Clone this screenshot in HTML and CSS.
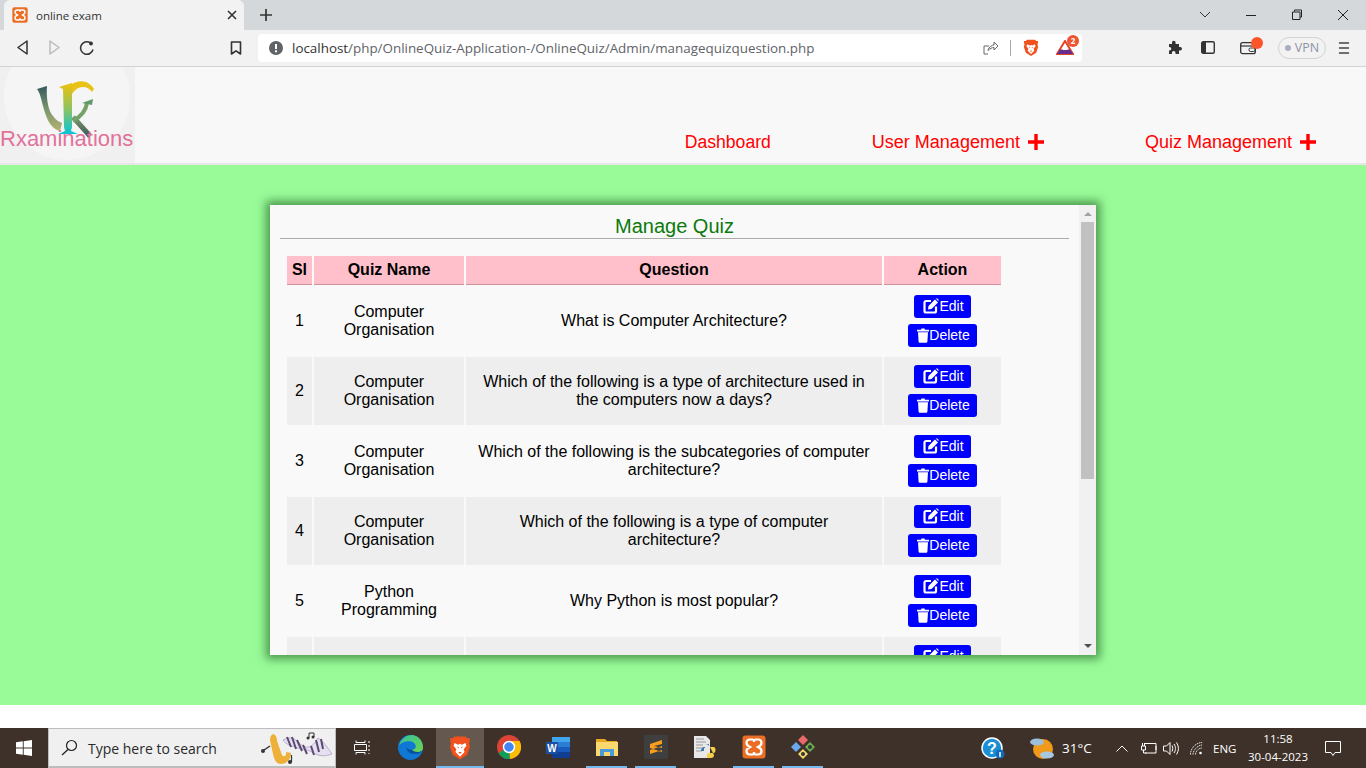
FILE: index.html
```html
<!DOCTYPE html>
<html lang="en">
<head>
<meta charset="utf-8">
<title>online exam</title>
<link rel="stylesheet" href="styles.css">
</head>
<body>
<svg class="defs" width="0" height="0">
  <defs>
    <symbol id="xampp" viewBox="0 0 24 24">
      <rect x="0.5" y="0.5" width="23" height="23" rx="3" fill="#ea6f25"/>
      <path d="M8 4.500h2.500c1.500 0 1.500 2.500 1.500 2.500s0-2.500 1.500-2.500H16c2.500 0 3.500 1.500 3.500 3.500S18 11 16 12c2 1 3.500 2 3.500 4s-1 3.500-3.500 3.500h-2.500C12 19.500 12 17 12 17s0 2.500-1.500 2.500H8c-2.500 0-3.500-1.500-3.500-3.500S6 13 8 12C6 11 4.500 10 4.500 8S5.500 4.500 8 4.500z" fill="none" stroke="#fff" stroke-width="2.200"/>
    </symbol>
    <symbol id="lion" viewBox="0 0 24 26">
      <path d="M6 1h12l2 2 3 0-1 6 1 3-3 9-8 5-8-5-3-9 1-3-1-6 3 0z" fill="#f1511f"/>
      <path d="M6 8l4 2 2-1 2 1 4-2 1 3-3 4 1 3-5 5-5-5 1-3-3-4z" fill="#fff"/>
      <path d="M9 12l2 1-1 1zM15 12l-2 1 1 1zM10 18h4l-2 2z" fill="#f1511f"/>
    </symbol>
    <symbol id="edit" viewBox="0 0 16 16">
      <path d="M8 3H3a1.500 1.500 0 0 0-1.500 1.500v8.500A1.500 1.500 0 0 0 3 14.500h8.500a1.500 1.500 0 0 0 1.500-1.500V8.500" fill="none" stroke="#fff" stroke-width="2.200"/>
      <path d="M5.500 8l6.500-6.500 3 3L8.500 11 5 11.500z" fill="#fff"/>
      <path d="M13 .8l.9-.6 1.900 1.900-.6.9z" fill="#fff"/>
    </symbol>
    <symbol id="trash" viewBox="0 0 12 15">
      <path d="M0 1.800h4L4.500.4h3l.5 1.400h4v1.700H0z" fill="#fff"/>
      <path d="M1 4.300h10l-.6 9.400a1.200 1.200 0 0 1-1.200 1H2.800a1.200 1.200 0 0 1-1.200-1z" fill="#fff"/>
    </symbol>
    <symbol id="plus" viewBox="0 0 16 16">
      <path d="M6.300 0h3.400v6.300H16v3.400H9.700V16H6.300V9.700H0V6.300h6.300z" fill="#f00"/>
    </symbol>
  </defs>
</svg>

<header class="browser">
  <div class="tabstrip">
    <div class="tab">
      <svg class="fav" width="16" height="16"><use href="#xampp"/></svg>
      <span class="tab-title">online exam</span>
      <svg class="tab-close" width="10" height="10" viewBox="0 0 10 10"><path d="M1 1l8 8M9 1l-8 8" stroke="#333" stroke-width="1.600"/></svg>
    </div>
    <svg class="newtab" width="12" height="12" viewBox="0 0 12 12"><path d="M6 0v12M0 6h12" stroke="#333" stroke-width="1.700"/></svg>
    <div class="winctl">
      <svg width="14" height="8" viewBox="0 0 14 8"><path d="M2 1l5 5 5-5" fill="none" stroke="#333" stroke-width="1"/></svg>
      <svg width="12" height="12" viewBox="0 0 12 12"><path d="M1 6.500h10" stroke="#222" stroke-width="1"/></svg>
      <svg width="12" height="12" viewBox="0 0 12 12"><path d="M3.500 2.500V1h7v7H9M1.500 3h7.500v7.500H1.500z" fill="none" stroke="#222" stroke-width="1"/></svg>
      <svg width="12" height="12" viewBox="0 0 12 12"><path d="M1 1l10 10M11 1L1 11" stroke="#222" stroke-width="1"/></svg>
    </div>
  </div>
  <div class="toolbar">
    <div class="nav-icons">
      <svg width="14" height="15" viewBox="0 0 14 15"><path d="M12 1v13L3 7.500z" fill="none" stroke="#333" stroke-width="1.500" stroke-linejoin="round"/></svg>
      <svg width="14" height="15" viewBox="0 0 14 15"><path d="M3 1v13l9-6.500z" fill="none" stroke="#bbb" stroke-width="1.500" stroke-linejoin="round"/></svg>
      <svg width="16" height="16" viewBox="0 0 16 16"><path d="M14 9.500A6.300 6.300 0 1 1 11 2.500" fill="none" stroke="#333" stroke-width="1.500"/><circle cx="12" cy="3.500" r="1.900" fill="#333"/></svg>
    </div>
    <svg class="bookmark" width="12" height="14" viewBox="0 0 12 14"><path d="M1.500 1h9v12L6 9.800 1.500 13z" fill="none" stroke="#333" stroke-width="1.600" stroke-linejoin="round"/></svg>
    <div class="address">
      <svg class="alert" width="14" height="14" viewBox="0 0 14 14"><circle cx="7" cy="7" r="7" fill="#5f6368"/><path d="M6 3h2v5H6zM6 9.300h2v2H6z" fill="#fff"/></svg>
      <span class="url"><span class="host">localhost</span>/php/OnlineQuiz-Application-/OnlineQuiz/Admin/managequizquestion.php</span>
      <svg class="share" width="16" height="14" viewBox="0 0 16 14"><path d="M5 13H1V5h5M5 9c1-3 4-5 6-5V1l4 4-4 4V6.500c-2 0-4 1-6 3z" fill="none" stroke="#666" stroke-width="1"/></svg>
      <span class="addr-sep"></span>
      <svg class="lion-small" width="16" height="17"><use href="#lion"/></svg>
      <span class="bat">
        <svg width="18" height="15" viewBox="0 0 18 15"><path d="M9 1l8 13H1z" fill="#fff" stroke="#e0452c" stroke-width="2"/><path d="M1 14h16L14 9.500H4z" fill="#662d91"/><path d="M9 6l2.500 4h-5z" fill="#fff"/></svg>
        <span class="bat-badge">2</span>
      </span>
    </div>
    <div class="ext-icons">
      <svg width="15" height="15" viewBox="0 0 15 15"><path d="M1 4h3V2.500a1.800 1.800 0 0 1 3.600 0V4H11v3h1.200a1.800 1.800 0 0 1 0 3.600H11V14H7.500v-1.300a1.800 1.800 0 0 0-3.600 0V14H1v-3.500h.5a1.800 1.800 0 0 0 0-3.600H1z" fill="#333"/></svg>
      <svg class="side" width="14" height="13" viewBox="0 0 14 13"><rect x="0.700" y="0.700" width="12.600" height="11.600" rx="1.500" fill="none" stroke="#333" stroke-width="1.400"/><rect x="1" y="1" width="4" height="11" fill="#333"/></svg>
      <span class="wallet">
        <svg width="16" height="14" viewBox="0 0 16 14"><rect x="0.700" y="1.700" width="14.600" height="11" rx="2" fill="none" stroke="#333" stroke-width="1.300"/><path d="M1 5h14" stroke="#333" stroke-width="1.200"/><rect x="9" y="7" width="6" height="3.500" rx="1.500" fill="none" stroke="#333"/></svg>
        <span class="wallet-dot"></span>
      </span>
      <span class="vpn"><span class="vpn-dot"></span>VPN</span>
      <svg class="menu" width="10" height="12" viewBox="0 0 10 12"><path d="M0 1h10M0 6h10M0 11h10" stroke="#444" stroke-width="1.500"/></svg>
    </div>
  </div>
</header>

<div class="site-head">
  <div class="brand">
    <span class="brand-disc"></span>
    <svg class="brand-logo" width="135" height="96" viewBox="0 0 135 96">
      <defs>
        <linearGradient id="g-stem" x1="0" y1="0" x2="0" y2="1"><stop offset="0" stop-color="#eec10c"/><stop offset=".5" stop-color="#8fc35e"/><stop offset="1" stop-color="#06c4d8"/></linearGradient>
        <linearGradient id="g-left" x1="0" y1="0" x2="0" y2="1"><stop offset="0" stop-color="#36595f"/><stop offset=".55" stop-color="#7d9a6c"/><stop offset="1" stop-color="#b5b070"/></linearGradient>
        <linearGradient id="g-leg" x1="0" y1="0" x2="0" y2="1"><stop offset="0" stop-color="#7d9a6c"/><stop offset="1" stop-color="#3f5a58"/></linearGradient>
      </defs>
      <path d="M37 22L47 19C46 30 48 44 53 49C56 53 59 55 62 56L60 64C50 62 46 50 43 39C41 31 40 26 37 22z" fill="url(#g-left)"/>
      <path d="M73 50L90 69" fill="none" stroke="url(#g-leg)" stroke-width="5"/>
      <path d="M59 20L72 16V60L71 64L78 67H58L65 64L64 60L63 22z" fill="url(#g-stem)"/>
      <path d="M72 17C78 13 85 14 88 16C91 18 93 20 94 22L92 25C90 22 87 20 83 20C78 20 75 23 72 27z" fill="#e8c214"/>
      <path d="M87 36C86 44 80 50 73 54" fill="none" stroke="#74a266" stroke-width="4"/>
      <path d="M93 32L82 36L92 38z" fill="#5f9a68"/>
    </svg>
    <span class="brand-name">Rxaminations</span>
  </div>
  <nav class="site-nav">
    <a class="nav-link nav-dash">Dashboard</a>
    <a class="nav-link">User Management<svg class="plus" width="16" height="16"><use href="#plus"/></svg></a>
    <a class="nav-link">Quiz Management<svg class="plus" width="16" height="16"><use href="#plus"/></svg></a>
  </nav>
</div>

<main class="stage">
  <section class="card">
    <div class="card-body">
      <h1 class="card-title">Manage Quiz</h1>
      <hr class="rule">
      <table class="quiz-table">
        <thead>
          <tr><th class="c-sl">Sl</th><th class="c-name">Quiz Name</th><th class="c-q">Question</th><th class="c-act">Action</th></tr>
        </thead>
        <tbody>
          <tr>
            <td>1</td><td>Computer Organisation</td><td>What is Computer Architecture?</td>
            <td><div class="actions"><a class="btn"><svg width="16" height="16"><use href="#edit"/></svg>Edit</a><a class="btn"><svg width="12" height="15"><use href="#trash"/></svg>Delete</a></div></td>
          </tr>
          <tr>
            <td>2</td><td>Computer Organisation</td><td>Which of the following is a type of architecture used in the computers now a days?</td>
            <td><div class="actions"><a class="btn"><svg width="16" height="16"><use href="#edit"/></svg>Edit</a><a class="btn"><svg width="12" height="15"><use href="#trash"/></svg>Delete</a></div></td>
          </tr>
          <tr>
            <td>3</td><td>Computer Organisation</td><td>Which of the following is the subcategories of computer architecture?</td>
            <td><div class="actions"><a class="btn"><svg width="16" height="16"><use href="#edit"/></svg>Edit</a><a class="btn"><svg width="12" height="15"><use href="#trash"/></svg>Delete</a></div></td>
          </tr>
          <tr>
            <td>4</td><td>Computer Organisation</td><td>Which of the following is a type of computer architecture?</td>
            <td><div class="actions"><a class="btn"><svg width="16" height="16"><use href="#edit"/></svg>Edit</a><a class="btn"><svg width="12" height="15"><use href="#trash"/></svg>Delete</a></div></td>
          </tr>
          <tr>
            <td>5</td><td>Python Programming</td><td>Why Python is most popular?</td>
            <td><div class="actions"><a class="btn"><svg width="16" height="16"><use href="#edit"/></svg>Edit</a><a class="btn"><svg width="12" height="15"><use href="#trash"/></svg>Delete</a></div></td>
          </tr>
          <tr class="row-cut">
            <td></td><td></td><td></td>
            <td><div class="actions"><a class="btn"><svg width="16" height="16"><use href="#edit"/></svg>Edit</a></div></td>
          </tr>
        </tbody>
      </table>
    </div>
    <div class="scrollbar">
      <span class="arrow-up"></span>
      <span class="thumb"></span>
      <span class="arrow-down"></span>
    </div>
  </section>
</main>

<div class="gap-strip"></div>

<footer class="taskbar">
  <div class="start">
    <svg width="16" height="16" viewBox="0 0 16 16"><path d="M0 2.300l6.800-1v6.300H0zM7.700 1.200L16 0v7.600H7.700zM0 8.400h6.800v6.300L0 13.700zM7.700 8.400H16V16l-8.300-1.200z" fill="#fff"/></svg>
  </div>
  <div class="search">
    <svg class="search-ico" width="17" height="17" viewBox="0 0 17 17"><circle cx="10.500" cy="6.500" r="5" fill="none" stroke="#222" stroke-width="1.200"/><path d="M7 10.500L1 16" stroke="#222" stroke-width="1.300"/></svg>
    <span class="search-text">Type here to search</span>
    <svg class="search-art" width="74" height="34" viewBox="0 0 74 34">
      <path d="M14 3c3 1 4 3 4 7l5 14c2 3 5 0 4-3l5 1c0 6-4 11-10 11-5 0-7-5-8-10L11 9c0-3 1-5 3-6z" fill="#eeb038"/>
      <circle cx="4" cy="20" r="2" fill="#333"/><path d="M5 19l6-4" stroke="#333" stroke-width="1.500"/>
      <circle cx="31" cy="31" r="2" fill="#333"/><path d="M32.500 31V24" stroke="#333" stroke-width="1.200"/>
      <path d="M24 9c6-3 10-3 15 2s12 10 20-4c5 3 10 10 14 16-8 3-14 2-20-2-6-3-10-3-14-4-6-2-12-3-15-8z" fill="#e6dff0" stroke="#b9aed0"/>
      <path d="M28 6l4 10M33 6l4 12M38 9l5 11M44 14l4 9M52 15l3 9M57 9l3 12M62 8l2 10" stroke="#5b4a72" stroke-width="2"/>
      <circle cx="49" cy="7" r="1.500" fill="#333"/><circle cx="54" cy="6" r="1.500" fill="#333"/><path d="M50 7V2h5v4" fill="none" stroke="#333"/>
    </svg>
  </div>
  <div class="task-items">
    <span class="task">
      <svg width="16" height="15" viewBox="0 0 16 15"><path d="M2 .5v2h9V.5M.5 4.500h12v6H.5zM2 14.500v-2h9v2M15 1v2M15 5v2M15 9v2M15 13v1" fill="none" stroke="#fff" stroke-width="1"/></svg>
    </span>
    <span class="task">
      <svg width="25" height="25" viewBox="0 0 24 24"><defs><linearGradient id="edge1" x1="0" y1="0" x2="1" y2="1"><stop offset="0" stop-color="#35c1a0"/><stop offset="1" stop-color="#6fd34a"/></linearGradient></defs><circle cx="12" cy="12" r="12" fill="#0f78d4"/><path d="M1 10C3 3 9 0 13 0c6 0 11 5 11 12 0 4-4 5-7 5-3 0-4-2-4-3 3 0 4-1 4-3 0-3-3-5-6-5-5 0-9 2-10 4z" fill="url(#edge1)"/><path d="M13 14c-3 0-5-1-5-3 0 4 3 8 9 7 3 0 5-1 6-3-3 2-7 2-10-1z" fill="#0a4f9e"/></svg>
    </span>
    <span class="task task-active">
      <svg width="22" height="25"><use href="#lion"/></svg>
    </span>
    <span class="task">
      <svg width="24" height="24" viewBox="0 0 24 24"><circle cx="12" cy="12" r="12" fill="#dc4437"/><path d="M12 12L1.500 18A12 12 0 0 0 13 24z" fill="#109d58"/><path d="M12 6h10.500A12 12 0 0 1 13 24z" fill="#fbbc05"/><circle cx="12" cy="12" r="5.500" fill="#4285f4" stroke="#fff" stroke-width="1.500"/></svg>
    </span>
    <span class="task">
      <svg width="24" height="21" viewBox="0 0 24 21"><path d="M6 0h18v21H6z" fill="#185abd"/><path d="M6 0h18v5H6z" fill="#41a5ee"/><path d="M6 5h18v5H6z" fill="#2b7cd3"/><path d="M6 15h18v6H6z" fill="#103f91"/><rect x="0" y="5" width="12" height="12" rx="1" fill="#1a4fa8"/><text class="w-letter" x="6" y="14.500">W</text></svg>
    </span>
    <span class="task task-open">
      <svg width="22" height="18" viewBox="0 0 22 18"><path d="M0 1h9l2 2h10v15H0z" fill="#e8a920"/><path d="M0 4h22v14H0z" fill="#fbd96f"/><path d="M4 11h14v7H4z" fill="#4a9bdc"/><path d="M8 14h6v4H8z" fill="#fbd96f"/></svg>
    </span>
    <span class="task task-open">
      <svg width="24" height="24" viewBox="0 0 24 24"><rect width="24" height="24" rx="2" fill="#3f3f3f"/><path d="M18 5L6 9v4l12 4v-4L10 11l8-2zM6 15l12-4v4L6 19z" fill="#f99d1c"/></svg>
    </span>
    <span class="task">
      <svg width="24" height="24" viewBox="0 0 24 24"><path d="M1 1h12l4 4v18H1z" fill="#e8e8e8"/><path d="M3 4h8M3 7h10M3 10h7M3 13h6M3 16h6" stroke="#999"/><path d="M12 9c3 0 4 1 4 3h-5c-2 0-3 2-3 4h3v-2c0-1 1-2 2-2h3V9z" fill="#3a76a8"/><path d="M17 12h4c2 1 2 5 0 6h-5c-1 0-2 1-2 2v3h4c2 0 3-1 3-3z" fill="#f5cf45"/></svg>
    </span>
    <span class="task task-open">
      <svg width="24" height="24"><use href="#xampp"/></svg>
    </span>
    <span class="task task-open">
      <svg width="24" height="24" viewBox="0 0 24 24"><path d="M12 0l5 5-5 5-5-5z" fill="#e96a6a"/><path d="M5 7l5 5-5 5-5-5z" fill="#6ca8f0"/><path d="M19 7l5 5-5 5-5-5z" fill="#6ab04c"/><path d="M12 14l5 5-5 5-5-5z" fill="#f2d76b"/><circle cx="19" cy="12" r="2" fill="#333"/><circle cx="12" cy="19" r="2" fill="#333"/></svg>
    </span>
  </div>
  <div class="tray">
    <svg class="tray-help" width="24" height="22" viewBox="0 0 24 22"><circle cx="11" cy="11" r="10" fill="#1a8fd6" stroke="#fff" stroke-width="1.500"/><text class="help-q" x="11" y="17">?</text><circle cx="19" cy="17" r="4.500" fill="#0f6cbd"/><path d="M19 15v5" stroke="#fff" stroke-width="1.500"/></svg>
    <svg class="tray-weather" width="25" height="24" viewBox="0 0 25 24"><circle cx="13" cy="13" r="10" fill="#f09a1c"/><ellipse cx="7" cy="6" rx="7" ry="3.500" fill="#9cc0dc"/><ellipse cx="17" cy="19" rx="7" ry="3.500" fill="#a8c8e0"/></svg>
    <span class="temp">31°C</span>
    <svg class="tray-caret" width="12" height="7" viewBox="0 0 12 7"><path d="M.5 6.500L6 1l5.500 5.500" fill="none" stroke="#fff"/></svg>
    <svg class="tray-batt" width="16" height="11" viewBox="0 0 16 11"><path d="M4 .5h11v9.500H4" fill="none" stroke="#fff"/><path d="M15 3v4" stroke="#fff"/><path d="M.5 3h4v4h-4zM1.500 0v3M3.500 0v3M2.500 7v3h3" fill="none" stroke="#fff"/></svg>
    <svg class="tray-vol" width="17" height="13" viewBox="0 0 17 13"><path d="M.5 4h3L7 .5v12L3.500 9h-3z" fill="none" stroke="#fff"/><path d="M9 3.500c1 2 1 4 0 6M11 2c2 3 2 6 0 9M13.500 .5c2.500 4 2.500 8 0 12" fill="none" stroke="#fff"/></svg>
    <svg class="tray-wifi" width="13" height="13" viewBox="0 0 13 13"><path d="M.5 12.500C.5 6 6 .5 12.500 .5M3 12.500C3 8 8 3 12.500 3M5.500 12.500c0-3 3-6.500 6.500-6.500" fill="none" stroke="#ddd" stroke-dasharray="1.500 .6"/><circle cx="10.500" cy="11" r="1.300" fill="#fff"/></svg>
    <span class="lang">ENG</span>
    <span class="clock"><span>11:58</span><span>30-04-2023</span></span>
    <svg class="tray-note" width="16" height="15" viewBox="0 0 16 15"><path d="M.5 .5h15v11H10l-2 3-2-3H.5z" fill="none" stroke="#fff"/></svg>
  </div>
</footer>
</body>
</html>
```

FILE: styles.css
```css
* { box-sizing: border-box; }
html, body { margin: 0; padding: 0; }
body {
  width: 1366px;
  height: 768px;
  overflow: hidden;
  display: flex;
  flex-direction: column;
  background: #fff;
  font-family: "Liberation Sans", Arial, sans-serif;
}
.defs { position: absolute; }
svg { display: block; flex: none; }

/* browser chrome */
.browser { height: 67px; flex: none; font-family: "Open Sans", "Noto Sans", sans-serif; }
.tabstrip {
  height: 30px;
  background: #d5d8db;
  display: flex;
  align-items: center;
  padding-left: 4px;
}
.tab {
  width: 240px;
  height: 30px;
  background: #f2f2f2;
  border-radius: 6px 6px 0 0;
  display: flex;
  align-items: center;
  padding: 0 7px 0 8px;
}
.tab-title { margin-left: 8px; font-size: 11.500px; color: #333; flex: 1; }
.newtab { margin-left: 16px; }
.winctl { margin-left: auto; display: flex; align-items: center; gap: 34px; padding-right: 17px; }
.winctl svg:first-child { margin-right: -1px; }
.toolbar {
  height: 37px;
  background: #f2f2f2;
  border-bottom: 1px solid #d3d3d3;
  display: flex;
  align-items: center;
  padding-bottom: 1px;
}
.nav-icons { display: flex; align-items: center; gap: 18px; margin-left: 15px; width: 86px; }
.bookmark { margin-left: 129px; }
.address {
  margin-left: 16px;
  width: 824px;
  height: 28px;
  background: #fff;
  border-radius: 4px;
  display: flex;
  align-items: center;
  padding-left: 11px;
}
.url { margin-left: 9px; font-size: 13.400px; color: #5f6368; width: 691px; white-space: nowrap; }
.host { color: #333; }
.addr-sep { width: 1px; height: 16px; background: #aaa; margin-left: 11px; }
.lion-small { margin-left: 12px; }
.bat { position: relative; margin-left: 17px; display: block; }
.bat-badge {
  position: absolute;
  left: 11px;
  top: -5px;
  width: 12px;
  height: 12px;
  border-radius: 50%;
  background: #f0532d;
  color: #fff;
  font-size: 8px;
  line-height: 12px;
  text-align: center;
  font-weight: 700;
}
.ext-icons { display: flex; align-items: center; margin-left: 86px; }
.side { margin-left: 18px; }
.wallet { position: relative; margin-left: 25px; display: block; }
.wallet-dot {
  position: absolute;
  left: 11px;
  top: -4px;
  width: 12px;
  height: 12px;
  border-radius: 50%;
  background: #fb542b;
}
.vpn {
  margin-left: 22px;
  width: 48px;
  height: 22px;
  border: 1px solid #d3d3d3;
  border-radius: 11px;
  display: flex;
  align-items: center;
  justify-content: center;
  gap: 4px;
  font-size: 12.500px;
  color: #8d93a6;
}
.vpn-dot { width: 6px; height: 6px; border-radius: 50%; background: #a9adc4; }
.menu { margin-left: 13px; }

/* site header */
.site-head {
  height: 98px;
  flex: none;
  background: #f8f8f8;
  border-bottom: 2px solid #e7e7e7;
  display: flex;
}
.brand { position: relative; width: 135px; height: 96px; background: #f0f0f0; flex: none; overflow: hidden; }
.brand-disc { position: absolute; left: 4px; top: -33px; width: 126px; height: 126px; border-radius: 50%; background: #f5f5f5; }
.brand-logo { position: absolute; left: 0; top: 0; filter: blur(.5px); }
.brand-name {
  position: absolute;
  left: 0;
  top: 59px;
  font-size: 22px;
  line-height: 25px;
  color: #e2719b;
  white-space: nowrap;
}
.site-nav {
  flex: 1;
  display: flex;
  justify-content: flex-end;
  align-items: flex-end;
  gap: 101px;
  padding: 0 50px 11px 0;
}
.nav-link { display: flex; align-items: center; font-size: 18px; line-height: 20px; color: #f00; }
.nav-dash { font-size: 17.600px; }
.plus { margin-left: 8px; }

/* stage */
.stage {
  height: 540px;
  flex: none;
  background: #98fb98;
  display: flex;
  justify-content: center;
  align-items: flex-start;
  padding-top: 40px;
}
.card {
  width: 826px;
  height: 450px;
  background: #f9f9f9;
  box-shadow: 0 0 9px 4px rgba(30, 90, 30, .62);
  display: flex;
}
.card-body { width: 809px; height: 450px; overflow: hidden; padding: 10px 10px 0; }
.card-title {
  margin: 0;
  font-size: 20px;
  font-weight: 400;
  line-height: 23px;
  text-align: center;
  color: #0b7a0b;
}
.rule { margin: 0; height: 1px; border: 0; background: #aaa; }
.quiz-table {
  margin: 15px 0 0 5px;
  width: 718px;
  border-collapse: separate;
  border-spacing: 2px;
  table-layout: fixed;
  font-size: 16px;
  color: #000;
}
.c-sl { width: 25px; }
.c-name { width: 150px; }
.c-q { width: 416px; }
.c-act { width: 117px; }
.quiz-table th {
  height: 29px;
  padding: 0;
  background: #ffc0cb;
  border-bottom: 1px solid #d3919d;
  font-weight: 700;
}
.quiz-table td {
  height: 68px;
  padding: 0 8px;
  text-align: center;
  vertical-align: middle;
}
.quiz-table td:first-child { padding: 0; }
.quiz-table tbody tr:nth-child(even) td { background: #eee; }
.quiz-table .row-cut td { vertical-align: top; padding-top: 8px; }
.actions { display: flex; flex-direction: column; align-items: center; gap: 6px; }
.btn {
  height: 23px;
  padding: 0 7px 1px 9px;
  display: flex;
  align-items: center;
  background: #00f;
  color: #fff;
  border-radius: 3px;
  font-size: 14px;
  white-space: nowrap;
}
.scrollbar {
  width: 17px;
  height: 450px;
  background: #f1f1f1;
  display: flex;
  flex-direction: column;
  align-items: center;
  padding-top: 7px;
}
.arrow-up { width: 0; height: 0; border: 4px solid transparent; border-top: 0; border-bottom: 4px solid #a3a3a3; }
.thumb { width: 13px; height: 257px; margin-top: 6px; background: #c1c1c1; }
.arrow-down { width: 0; height: 0; margin-top: 165px; border: 4px solid transparent; border-bottom: 0; border-top: 4px solid #505050; }
.gap-strip { height: 23px; flex: none; background: #fff; }

/* taskbar */
.taskbar {
  height: 40px;
  flex: none;
  background: #3e3129;
  display: flex;
  align-items: stretch;
  font-family: "Open Sans", "Noto Sans", sans-serif;
  color: #fff;
}
.start { width: 48px; display: flex; align-items: center; justify-content: center; }
.search {
  width: 288px;
  background: #f0f0f0;
  border: 1px solid #bdbdbd;
  border-bottom-width: 2px;
  display: flex;
  align-items: center;
  padding-left: 12px;
}
.search-text { margin: 1px 0 0 10px; font-size: 14px; color: #2a2a2a; white-space: nowrap; width: 172px; }
.search-art { margin-left: -1px; }
.task-items { display: flex; margin-left: 1px; }
.task {
  width: 49px;
  display: flex;
  align-items: center;
  justify-content: center;
  border-bottom: 2px solid transparent;
}
.task-active { background: #65594f; border-bottom-color: #76b9ed; width: 48px; margin: 0 0 0 1px; }
.task-open { border-image: linear-gradient(to right, transparent 4.500px, #76b9ed 4.500px, #76b9ed 44.500px, transparent 44.500px) 1; }
.w-letter { font-family: "Liberation Sans", sans-serif; font-size: 10px; font-weight: 700; fill: #fff; text-anchor: middle; }
.help-q { font-family: "Liberation Sans", sans-serif; font-size: 16px; font-weight: 700; fill: #fff; text-anchor: middle; }
.tray { display: flex; align-items: center; margin-left: 154px; flex: 1; }
.tray-weather { margin-left: 25px; }
.temp { margin-left: 7px; font-size: 13.500px; width: 54px; }
.tray-batt { margin-left: 13px; }
.tray-vol { margin-left: 6px; }
.tray-wifi { margin-left: 10px; }
.lang { margin-left: 10px; font-size: 11.500px; width: 28px; }
.clock {
  width: 74px;
  display: flex;
  flex-direction: column;
  align-items: center;
  font-size: 11.500px;
  line-height: 18px;
}
.tray-note { margin-left: 10px; }
```
